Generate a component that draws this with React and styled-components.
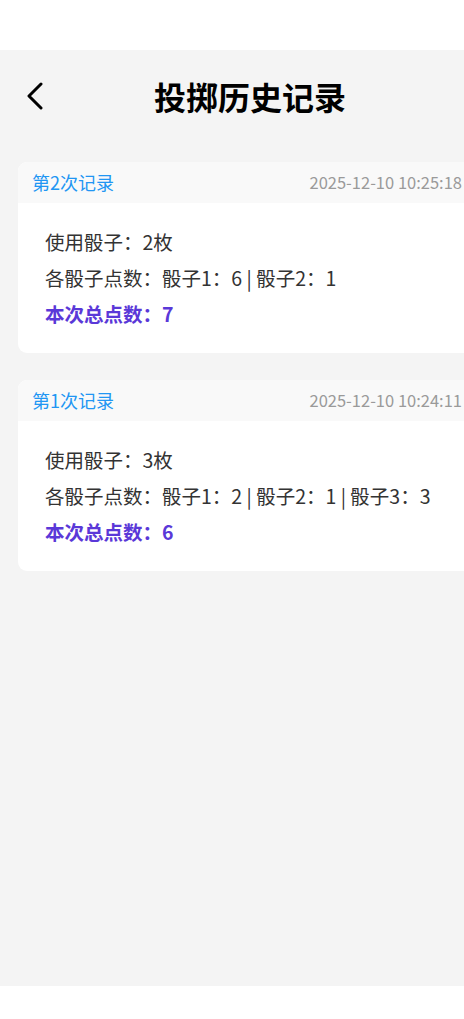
import styled, { createGlobalStyle } from "styled-components";

const GlobalStyle = createGlobalStyle`
  html, body {
    margin: 0;
    padding: 0;
    background: #ffffff;
    font-family: "Noto Sans CJK SC", "Noto Sans", sans-serif;
  }
  * { box-sizing: border-box; }
`;

// records shown newest first
const records = [
  { no: 2, time: "2025-12-10 10:25:18", dice: [6, 1] },
  { no: 1, time: "2025-12-10 10:24:11", dice: [2, 1, 3] },
];

function History() {
  return (
    <Screen>
      <GlobalStyle />
      <StatusBar />
      <Main>
        <Header>
          <BackButton aria-label="返回">
            <svg width="18" height="28" viewBox="0 0 18 28" fill="none">
              <polyline
                points="15,2 3,14 15,26"
                stroke="#000"
                strokeWidth="3"
                strokeLinecap="round"
                strokeLinejoin="round"
              />
            </svg>
          </BackButton>
          <Title>投掷历史记录</Title>
          <span />
        </Header>
        <List>
          {records.map((r) => (
            <Card key={r.no}>
              <CardHead>
                <RecordNo>第{r.no}次记录</RecordNo>
                <Time>{r.time}</Time>
              </CardHead>
              <CardBody>
                <Line>使用骰子：{r.dice.length}枚</Line>
                <Line>
                  各骰子点数：
                  {r.dice.map((d, i) => `骰子${i + 1}：${d}`).join(" | ")}
                </Line>
                <Line $total>本次总点数：{r.dice.reduce((a, b) => a + b, 0)}</Line>
              </CardBody>
            </Card>
          ))}
        </List>
      </Main>
      <BottomBar />
    </Screen>
  );
}

const Screen = styled.div`
  display: flex;
  flex-direction: column;
  height: 100vh;
  overflow: hidden;
`;

const StatusBar = styled.div`
  height: 50px;
  flex: none;
  background: #ffffff;
`;

const BottomBar = styled.div`
  height: 33px;
  flex: none;
  background: #ffffff;
`;

const Main = styled.div`
  flex: 1;
  width: 500px;
  background: #f4f4f4;
`;

const Header = styled.div`
  display: grid;
  grid-template-columns: 1fr auto 1fr;
  align-items: center;
  height: 92px;
`;

const BackButton = styled.button`
  justify-self: start;
  display: flex;
  align-items: center;
  margin-left: 26px;
  padding: 0;
  border: none;
  background: none;
`;

const Title = styled.h1`
  margin: 0;
  font-size: 32px;
  font-weight: 700;
  color: #000;
  line-height: 1;
`;

const List = styled.div`
  display: flex;
  flex-direction: column;
  gap: 27px;
  padding: 20px 18px;
`;

const Card = styled.div`
  background: #ffffff;
  border-radius: 9px;
  overflow: hidden;
`;

const CardHead = styled.div`
  display: flex;
  align-items: center;
  justify-content: space-between;
  height: 41px;
  padding: 0 20px 2px 14px;
  background: #f9f9f9;
`;

const RecordNo = styled.span`
  font-size: 18px;
  color: #2196f3;
`;

const Time = styled.span`
  font-size: 16.5px;
  color: #9a9a9a;
`;

const CardBody = styled.div`
  padding: 21px 27px;
`;

const Line = styled.div`
  font-size: 19.5px;
  line-height: 36px;
  color: ${(p) => (p.$total ? "#5a38d8" : "#333333")};
  font-weight: ${(p) => (p.$total ? 700 : 400)};
`;

export default History;
